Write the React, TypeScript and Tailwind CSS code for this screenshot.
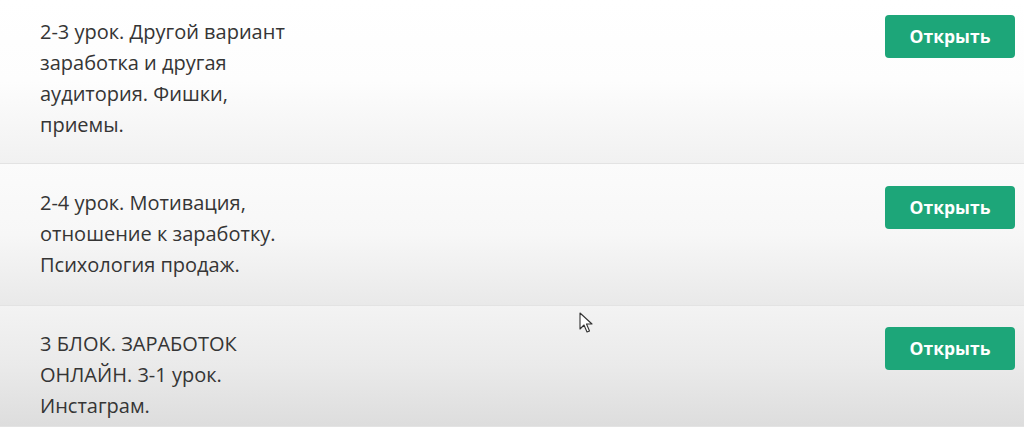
const lessons = [
  {
    lines: ["2-3 урок. Другой вариант", "заработка и другая", "аудитория. Фишки,", "приемы."],
    row: "h-[164px] pt-[16px] bg-gradient-to-b from-[#ffffff] via-[#fdfdfd] to-[#f1f1f1]",
  },
  {
    lines: ["2-4 урок. Мотивация,", "отношение к заработку.", "Психология продаж."],
    row: "h-[142px] pt-[23px] bg-gradient-to-b from-[#fbfbfb] via-[#f7f7f7] to-[#e9e9e9]",
  },
  {
    lines: ["3 БЛОК. ЗАРАБОТОК", "ОНЛАЙН. 3-1 урок.", "Инстаграм."],
    row: "h-[121px] pt-[22px] bg-gradient-to-b from-[#f3f3f3] via-[#eaeaea] to-[#dddddd]",
  },
];

function Cursor() {
  return (
    <svg className="absolute left-[579px] top-[312px]" width="14" height="22" viewBox="0 0 14 22">
      <path d="M1 1 L1 17 L5 13 L8 20 L10.5 19 L7.5 12 L13 12 Z" fill="#ffffff" stroke="#333" strokeWidth="1.1" strokeLinejoin="round" />
    </svg>
  );
}

export default function App() {
  return (
    <div className="relative w-[1024px] h-[427px] overflow-hidden bg-white" style={{ fontFamily: '"Open Sans", "Noto Sans", sans-serif' }}>
      {lessons.map((l, i) => (
        <div key={i} className={`flex justify-between pl-[40px] pr-[9px] border-b border-[#e3e3e3] ${l.row}`}>
          <div className="text-[20px] leading-[31px] text-[#353535]">
            {l.lines.map((t) => (
              <div key={t}>{t}</div>
            ))}
          </div>
          <button className="w-[130px] h-[43px] -mt-px rounded-[4px] bg-[#1da679] text-white text-[17.5px] font-bold">
            Открыть
          </button>
        </div>
      ))}
      <Cursor />
    </div>
  );
}
